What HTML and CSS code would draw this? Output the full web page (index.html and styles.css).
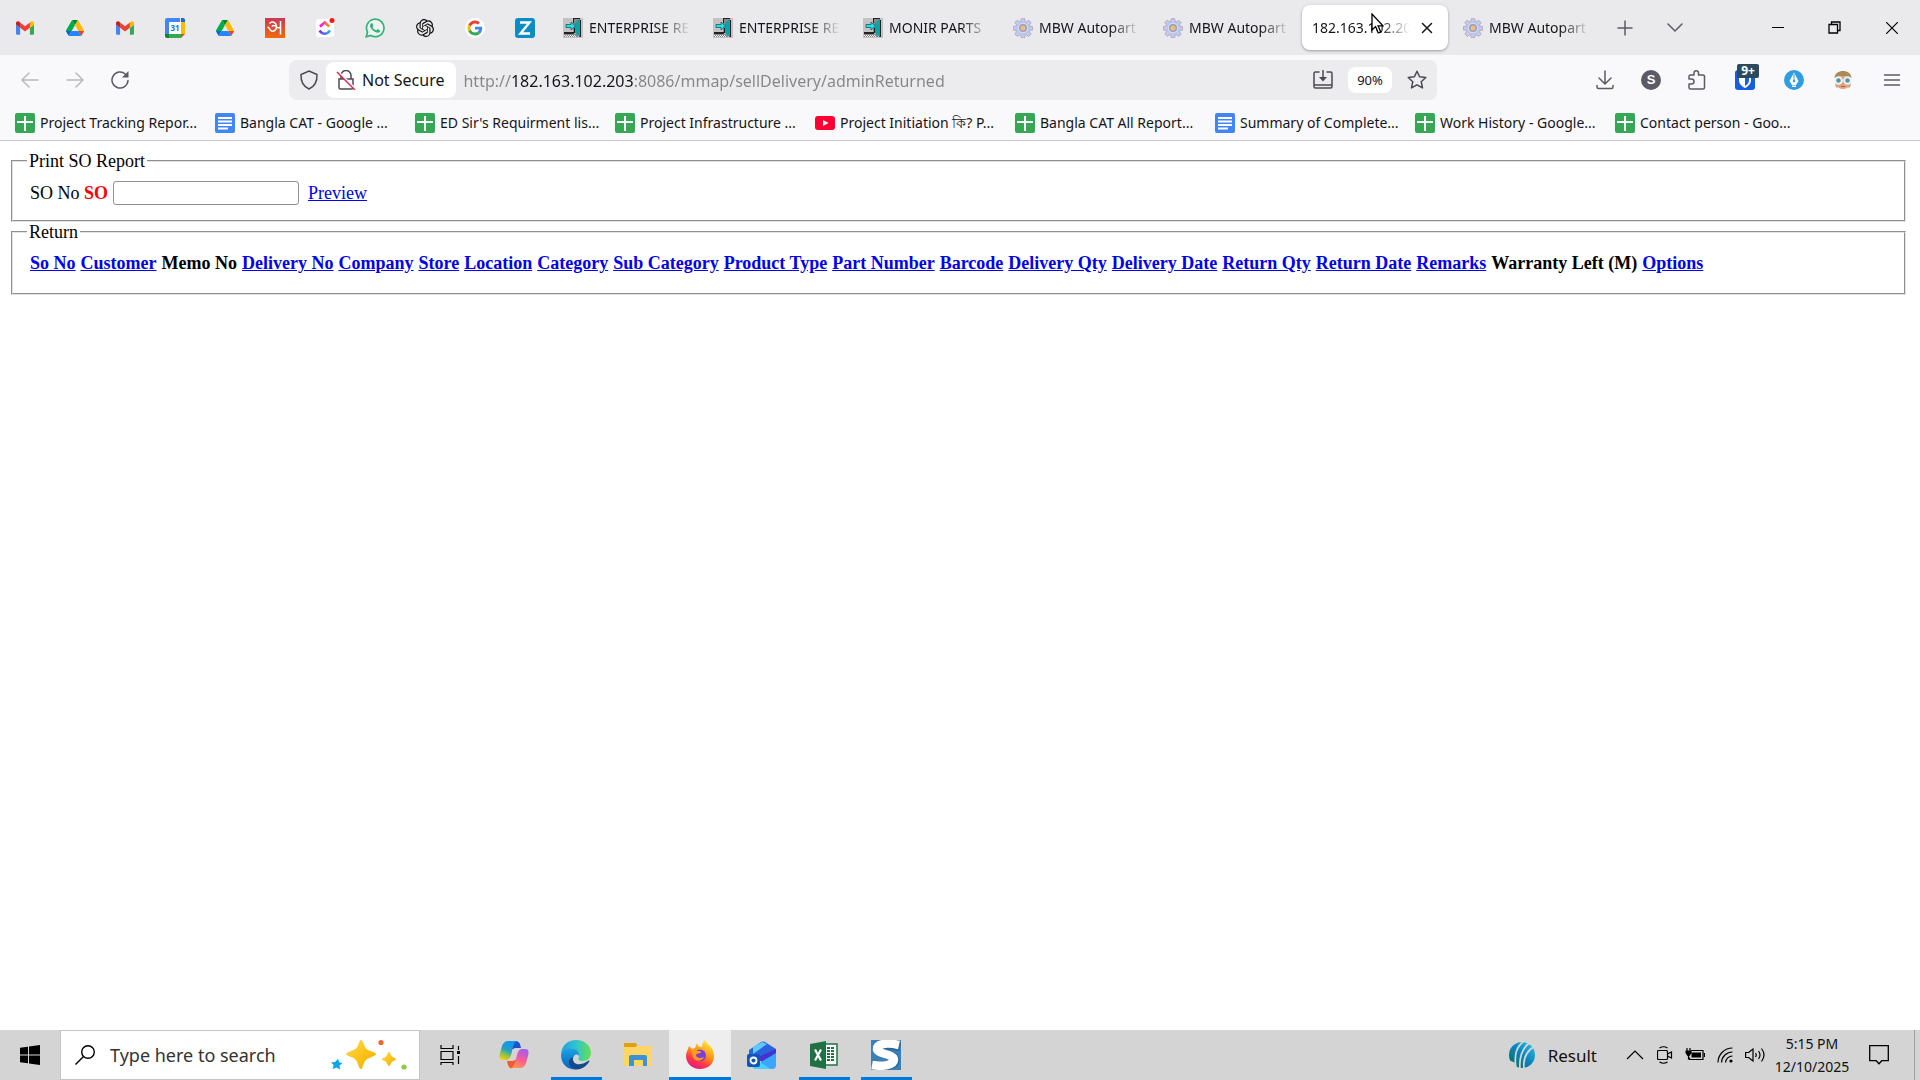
FILE: index.html
```html
<!DOCTYPE html>
<html lang="en">
<head>
  <meta charset="UTF-8">
  <title>Return</title>
  <link rel="stylesheet" href="styles.css">
</head>
<body>
  <!-- shared icons -->
  <svg class="defs" width="0" height="0" aria-hidden="true">
    <symbol id="gmail" viewBox="52 42 88 66">
      <path fill="#4285f4" d="M58 108h14V74L52 59v43c0 3.32 2.69 6 6 6"/>
      <path fill="#34a853" d="M120 108h14c3.32 0 6-2.69 6-6V59l-20 15"/>
      <path fill="#fbbc04" d="M120 48v26l20-15v-8c0-7.42-8.47-11.65-14.4-7.2"/>
      <path fill="#ea4335" d="M72 74V48l24 18 24-18v26L96 92"/>
      <path fill="#c5221f" d="M52 51v8l20 15V48l-5.6-4.2c-5.94-4.45-14.4-.22-14.4 7.2"/>
    </symbol>
    <symbol id="drive" viewBox="0 0 87.3 78">
      <path d="m6.6 66.85 3.85 6.65c.8 1.4 1.95 2.5 3.3 3.3l13.75-23.8h-27.5c0 1.55.4 3.1 1.2 4.5z" fill="#0066da"/>
      <path d="m43.65 25-13.75-23.8c-1.35.8-2.5 1.9-3.3 3.3l-25.4 44a9.06 9.06 0 0 0 -1.2 4.5h27.5z" fill="#00ac47"/>
      <path d="m73.55 76.8c1.35-.8 2.5-1.9 3.3-3.3l1.6-2.75 7.65-13.25c.8-1.4 1.2-2.95 1.2-4.5h-27.502l5.852 11.5z" fill="#ea4335"/>
      <path d="m43.65 25 13.75-23.8c-1.35-.8-2.9-1.2-4.5-1.2h-18.5c-1.6 0-3.15.45-4.5 1.2z" fill="#00832d"/>
      <path d="m59.8 53h-32.3l-13.75 23.8c1.35.8 2.9 1.2 4.5 1.2h50.8c1.6 0 3.15-.45 4.5-1.2z" fill="#2684fc"/>
      <path d="m73.4 26.5-12.7-22c-.8-1.4-1.95-2.5-3.3-3.3l-13.75 23.8 16.15 28h27.45c0-1.55-.4-3.1-1.2-4.5z" fill="#ffba00"/>
    </symbol>
    <symbol id="door" viewBox="0 0 20 20">
      <path fill="#c3c3c3" d="M0 0h20v20H0z"/>
      <path fill="#8a8a8a" d="M10 1h7v14h-7zM1 16h14v3H1z"/>
      <path fill="#222" d="M10 0h7v1h-6v4h-1zM1 14h10v2H1zM11 10h1v5h-1zM16 2h2v17h-2z"/>
      <path fill="#0aa3a3" d="M12 5l5-4v18l-5-4z"/>
      <path fill="#25e0e0" stroke="#055" stroke-width=".7" d="M3 6.500h5V4l4.500 4L8 12V9.500H3z"/>
      <path stroke="#eee" stroke-dasharray="1 1" d="M1 17.500h12M2 18.500h12"/>
    </symbol>
    <symbol id="gear" viewBox="0 0 20 20">
      <g fill="#c6cbea" stroke="#ab9dc4" stroke-width=".8">
        <path d="M8.300.7h3.400l.5 2.700 1.300.5 2.300-1.600 2.300 2.300-1.600 2.300.6 1.400 2.600.4v3.300l-2.700.5-.5 1.300 1.600 2.300-2.300 2.300-2.300-1.600-1.400.6-.4 2.500H8.300l-.5-2.600-1.300-.5-2.300 1.600-2.300-2.300 1.600-2.300-.6-1.400L.4 12V8.600l2.600-.4.5-1.400-1.600-2.300 2.300-2.300 2.300 1.600 1.400-.5z"/>
        <circle cx="10" cy="10" r="6" fill="#c8dcf3" stroke="#b2b9e0"/>
        <circle cx="10" cy="10" r="4" fill="#9c9cc0" stroke="none"/>
        <circle cx="10" cy="10" r="2.600" fill="#eebb78" stroke="none"/>
      </g>
    </symbol>
    <symbol id="sheet" viewBox="0 0 20 20">
      <rect width="20" height="20" rx="2" fill="#34a853"/>
      <path fill="#fff" d="M9 3h2v5h7v2h-7v8H9v-8H2V8h7z"/>
    </symbol>
    <symbol id="doc" viewBox="0 0 20 20">
      <rect width="20" height="20" rx="2" fill="#4285f4"/>
      <path fill="#fff" d="M3 4h14v2H3zM3 7.500h14v2H3zM3 11h14v2H3zM3 14.500h10v2H3z"/>
    </symbol>
  </svg>

  <nav class="tabs" aria-label="Tabs">
    <button class="pin" aria-label="Gmail"><svg class="ico small"><use href="#gmail"/></svg></button>
    <button class="pin" aria-label="Drive"><svg class="ico small"><use href="#drive"/></svg></button>
    <button class="pin" aria-label="Gmail"><svg class="ico small"><use href="#gmail"/></svg></button>
    <button class="pin" aria-label="Calendar">
      <svg class="ico" viewBox="0 0 20 20">
        <path fill="#4285f4" d="M2 0h13v4H4v12H0V2a2 2 0 0 1 2-2z"/>
        <path fill="#1967d2" d="M16 0h2a2 2 0 0 1 2 2v2h-4z"/>
        <path fill="#fbbc04" d="M16 4h4v12h-4z"/>
        <path fill="#188038" d="M0 16h4v4H2a2 2 0 0 1-2-2z"/>
        <path fill="#34a853" d="M4 16h12v4H4z"/>
        <path fill="#ea4335" d="M16 16h4l-4 4z"/>
        <path fill="#fff" d="M4 4h12v12H4z"/>
        <text class="cal-num" x="10" y="13" text-anchor="middle">31</text>
      </svg>
    </button>
    <button class="pin" aria-label="Drive"><svg class="ico small"><use href="#drive"/></svg></button>
    <button class="pin" aria-label="Bangla dictionary">
      <svg class="ico" viewBox="0 0 20 20">
        <defs><linearGradient id="ban" x2="0" y2="1"><stop stop-color="#c73a55"/><stop offset="1" stop-color="#ef6a10"/></linearGradient></defs>
        <path fill="url(#ban)" d="M0 0h20v20H0z"/>
        <path fill="none" stroke="#fff" stroke-width="1.500" d="M4.500 5.500C7 3 11 4 11.500 8c.5 4-3 6-5 5-2-1-2-3.500-4-4M7 8.500c1-1.500 3-1 4.500.5 1.500 1 3 1 4 0M15.500 3v13.500"/>
      </svg>
    </button>
    <button class="pin" aria-label="ClickUp">
      <svg class="ico" viewBox="0 0 20 20">
        <defs>
          <linearGradient id="cu1"><stop stop-color="#f0f"/><stop offset="1" stop-color="#ffa000"/></linearGradient>
          <linearGradient id="cu2"><stop stop-color="#8a2be2"/><stop offset="1" stop-color="#20b8f5"/></linearGradient>
        </defs>
        <rect x="1" y="1" width="18" height="18" rx="3" fill="#fff"/>
        <path fill="none" stroke="url(#cu1)" stroke-width="2.500" d="M5 8.500l4.700-4 4.700 4"/>
        <path fill="none" stroke="url(#cu2)" stroke-width="2.500" d="M4.500 12.500c3 4.300 7.500 4.300 10.500 0"/>
        <circle cx="17" cy="2.500" r="2.500" fill="#fa1818"/>
      </svg>
    </button>
    <button class="pin" aria-label="WhatsApp">
      <svg class="ico" viewBox="0 0 24 24">
        <path fill="#fff" fill-opacity=".4" stroke="#2bb673" stroke-width="2" d="M1.500 22.500l1.500-5.700A10.500 10.500 0 1 1 7 21z"/>
        <path fill="#2bb673" d="M17.472 14.382c-.297-.149-1.758-.867-2.03-.967-.273-.099-.471-.148-.67.15-.197.297-.767.966-.94 1.164-.173.199-.347.223-.644.075-.297-.15-1.255-.463-2.39-1.475-.883-.788-1.480-1.761-1.653-2.059-.173-.297-.018-.458.13-.606.134-.133.298-.347.446-.52.149-.174.198-.298.298-.497.099-.198.05-.371-.025-.52-.075-.149-.669-1.612-.916-2.207-.242-.579-.487-.5-.669-.51-.173-.008-.371-.01-.57-.01-.198 0-.52.074-.792.372-.272.297-1.040 1.016-1.040 2.479 0 1.462 1.065 2.875 1.213 3.074.149.198 2.096 3.200 5.077 4.487.709.306 1.262.489 1.694.625.712.227 1.360.195 1.871.118.571-.085 1.758-.719 2.006-1.413.248-.694.248-1.289.173-1.413-.074-.124-.272-.198-.57-.347z"/>
      </svg>
    </button>
    <button class="pin" aria-label="ChatGPT">
      <svg class="ico small" viewBox="0 0 24 24">
        <path fill="#111" d="M22.2819 9.8211a5.9847 5.9847 0 0 0-.5157-4.9108 6.0462 6.0462 0 0 0-6.5098-2.9A6.0651 6.0651 0 0 0 4.9807 4.1818a5.9847 5.9847 0 0 0-3.9977 2.9 6.0462 6.0462 0 0 0 .7427 7.0966 5.98 5.98 0 0 0 .511 4.9107 6.051 6.051 0 0 0 6.5146 2.9001A5.9847 5.9847 0 0 0 13.2599 24a6.0557 6.0557 0 0 0 5.7718-4.2058 5.9894 5.9894 0 0 0 3.9977-2.9001 6.0557 6.0557 0 0 0-.7475-7.0729zm-9.022 12.6081a4.4755 4.4755 0 0 1-2.8764-1.0408l.1419-.0804 4.7783-2.7582a.7948.7948 0 0 0 .3927-.6813v-6.7369l2.02 1.1686a.071.071 0 0 1 .038.052v5.5826a4.504 4.504 0 0 1-4.4945 4.4944zm-9.6607-4.1254a4.4708 4.4708 0 0 1-.5346-3.0137l.142.0852 4.783 2.7582a.7712.7712 0 0 0 .7806 0l5.8428-3.3685v2.3324a.0804.0804 0 0 1-.0332.0615L9.74 19.9502a4.4992 4.4992 0 0 1-6.1408-1.6464zM2.3408 7.8956a4.485 4.485 0 0 1 2.3655-1.9728V11.6a.7664.7664 0 0 0 .3879.6765l5.8144 3.3543-2.0201 1.1685a.0757.0757 0 0 1-.071 0l-4.8303-2.7865A4.504 4.504 0 0 1 2.3408 7.872zm16.5963 3.8558L13.1038 8.364 15.1192 7.2a.0757.0757 0 0 1 .071 0l4.8303 2.7913a4.4944 4.4944 0 0 1-.6765 8.1042v-5.6772a.79.79 0 0 0-.407-.667zm2.0107-3.0231l-.142-.0852-4.7735-2.7818a.7759.7759 0 0 0-.7854 0L9.409 9.2297V6.8974a.0662.0662 0 0 1 .0284-.0615l4.8303-2.7866a4.4992 4.4992 0 0 1 6.6802 4.66zM8.3065 12.863l-2.02-1.1638a.0804.0804 0 0 1-.038-.0567V6.0742a4.4992 4.4992 0 0 1 7.3757-3.4537l-.142.0805L8.704 5.459a.7948.7948 0 0 0-.3927.6813zm1.0976-2.3654l2.602-1.4998 2.6069 1.4998v2.9994l-2.5974 1.4997-2.6067-1.4997Z"/>
      </svg>
    </button>
    <button class="pin" aria-label="Google">
      <svg class="ico" viewBox="-8 -8 64 64">
        <circle cx="24" cy="24" r="32" fill="#fff"/>
        <path fill="#EA4335" d="M24 9.500c3.540 0 6.710 1.220 9.210 3.600l6.850-6.850C35.900 2.380 30.470 0 24 0 14.620 0 6.510 5.380 2.560 13.220l7.980 6.190C12.430 13.720 17.740 9.500 24 9.500z"/>
        <path fill="#4285F4" d="M46.980 24.550c0-1.570-.15-3.090-.38-4.550H24v9.020h12.940c-.58 2.960-2.260 5.480-4.780 7.180l7.730 6c4.510-4.180 7.090-10.360 7.090-17.650z"/>
        <path fill="#FBBC05" d="M10.530 28.590c-.48-1.450-.76-2.990-.76-4.590s.27-3.140.76-4.590l-7.980-6.190C.92 16.460 0 20.120 0 24c0 3.880.92 7.540 2.560 10.780l7.970-6.190z"/>
        <path fill="#34A853" d="M24 48c6.480 0 11.930-2.130 15.890-5.810l-7.730-6c-2.150 1.450-4.920 2.300-8.160 2.300-6.260 0-11.570-4.220-13.470-9.910l-7.980 6.190C6.510 42.620 14.620 48 24 48z"/>
      </svg>
    </button>
    <button class="pin" aria-label="Zoho">
      <svg class="ico" viewBox="0 0 20 20">
        <rect width="20" height="20" rx="3" fill="#0c8cc7"/>
        <path fill="none" stroke="#fff" stroke-width="2.400" d="M5 4.500h9.500L5.500 15.500H15"/>
      </svg>
    </button>
    <button class="tab"><svg class="ico"><use href="#door"/></svg><span>ENTERPRISE RE</span></button>
    <button class="tab"><svg class="ico"><use href="#door"/></svg><span>ENTERPRISE RE</span></button>
    <button class="tab"><svg class="ico"><use href="#door"/></svg><span>MONIR PARTS</span></button>
    <button class="tab"><svg class="ico"><use href="#gear"/></svg><span>MBW Autopart</span></button>
    <button class="tab"><svg class="ico"><use href="#gear"/></svg><span>MBW Autopart</span></button>
    <div class="tab active">
      <span>182.163.102.203</span>
      <button class="plain" aria-label="Close tab"><svg width="12" height="12" viewBox="0 0 12 12"><path class="ln dark" d="M1.500 1.500l9 9M10.500 1.500l-9 9"/></svg></button>
      <svg class="cursor" width="13" height="21" viewBox="0 0 13 21"><path fill="#fff" stroke="#000" stroke-width="1.300" d="M1 1v16l3.600-3.400L7.300 20l2.500-1.100-2.700-6H12z"/></svg>
    </div>
    <button class="tab"><svg class="ico"><use href="#gear"/></svg><span>MBW Autopart</span></button>
    <button class="strip-btn" aria-label="New tab"><svg width="16" height="16" viewBox="0 0 16 16"><path class="ln" d="M8 1v14M1 8h14"/></svg></button>
    <button class="strip-btn" aria-label="List all tabs"><svg width="16" height="16" viewBox="0 0 16 16"><path class="ln" d="M1 4l7 7 7-7"/></svg></button>
    <div class="win-btns">
      <button aria-label="Minimize"><svg width="12" height="12" viewBox="0 0 12 12"><path stroke="#000" d="M0 5.500h12"/></svg></button>
      <button aria-label="Restore"><svg width="13" height="13" viewBox="0 0 13 13"><path fill="none" stroke="#000" stroke-width="1.300" d="M1 3.500h8.500V12H1zM3.500 3.500V1H12v8.500H9.500"/></svg></button>
      <button aria-label="Close"><svg width="12" height="12" viewBox="0 0 12 12"><path stroke="#000" stroke-width="1.200" d="M0 0l12 12M12 0L0 12"/></svg></button>
    </div>
  </nav>

  <div class="toolbar">
    <div class="nav-btns">
      <button disabled aria-label="Back"><svg width="20" height="20" viewBox="0 0 20 20"><path class="ln off" d="M18 10H2.500M9 3l-7 7 7 7"/></svg></button>
      <button disabled aria-label="Forward"><svg width="20" height="20" viewBox="0 0 20 20"><path class="ln off" d="M2 10h15.500M11 3l7 7-7 7"/></svg></button>
      <button aria-label="Reload"><svg width="20" height="20" viewBox="0 0 20 20"><path class="ln" d="M18 10.500a8 8 0 1 1-2.500-6.300"/><path fill="#5b5b66" d="M18.500 1v6.500H12z"/></svg></button>
    </div>
    <div class="urlbar">
      <button class="plain shield" aria-label="Tracking protection"><svg width="20" height="20" viewBox="0 0 20 20"><path class="ln dark2" d="M10 1l8 3.500c.3 7-2.500 12-8 14.500-5.500-2.500-8.300-7.500-8-14.500z"/></svg></button>
      <button class="secure">
        <svg width="20" height="20" viewBox="0 0 20 20"><path class="ln dark2" d="M5 9V5.500a5 5 0 0 1 10 0V9M3 9h14v8.500a1.500 1.500 0 0 1-1.500 1.500h-11A1.500 1.500 0 0 1 3 17.500z"/><path stroke="#fff" stroke-width="2" d="M2 1.500l18 18"/><path stroke="#e22850" stroke-width="1.500" d="M1 2l18 18"/></svg>
        Not Secure
      </button>
      <input class="url" type="text" aria-label="Address" value="http://182.163.102.203:8086/mmap/sellDelivery/adminReturned">
      <button class="plain" aria-label="Install site"><svg width="20" height="20" viewBox="0 0 20 20"><path class="ln dark2" stroke-width="2" d="M6 2H2.500A1.500 1.500 0 0 0 1 3.500v13A1.500 1.500 0 0 0 2.500 18h15a1.500 1.500 0 0 0 1.500-1.500v-13A1.500 1.500 0 0 0 17.500 2H14M1 15h18M10 0v9"/><path fill="#4a4a52" d="M6 7h8l-4 4.500z"/></svg></button>
      <button class="zoom">90%</button>
      <button class="plain" aria-label="Bookmark"><svg width="20" height="20" viewBox="0 0 20 20"><path class="ln dark2" stroke-linejoin="round" d="M10 1.200l2.600 5.600 6.200.7-4.600 4.200 1.300 6.200L10 14.800l-5.500 3.100 1.300-6.200L1.200 7.500l6.200-.7z"/></svg></button>
    </div>
    <div class="tools">
      <button aria-label="Downloads"><svg width="20" height="20" viewBox="0 0 20 20"><path class="ln" d="M10 1v12.500M4 8l6 6 6-6M2 15.500V17a1.500 1.500 0 0 0 1.500 1.500h13A1.500 1.500 0 0 0 18 17v-1.500"/></svg></button>
      <button aria-label="Account"><span class="avatar">S</span></button>
      <button aria-label="Extensions"><svg width="20" height="20" viewBox="0 0 20 20"><path class="ln" stroke-linejoin="round" d="M2 9V6.500A1.500 1.500 0 0 1 3.500 5H7V3a2.200 2.200 0 0 1 4.500 0v2H16a1.500 1.500 0 0 1 1.500 1.500v11A1.500 1.500 0 0 1 16 19H3.500A1.500 1.500 0 0 1 2 17.500V14h2.500a2.300 2.300 0 0 0 0-5z"/></svg></button>
      <button class="addon warden" aria-label="Bitwarden"><svg width="20" height="20" viewBox="0 0 20 20"><rect width="20" height="20" rx="3" fill="#175ddc"/><path fill="#fff" d="M4 3h12v7c0 4-3 6.500-6 8-3-1.500-6-4-6-8z"/><path fill="#175ddc" d="M10 5h4v5c0 3-2 5-4 6z"/></svg><span class="badge">9+</span></button>
      <button class="addon" aria-label="Pen tool"><svg width="20" height="20" viewBox="0 0 20 20"><circle cx="10" cy="10" r="10" fill="#2f9de0"/><path fill="#fff" d="M10 2.500l4.500 8.500-2.500 4H8l-2.500-4zM8 15.500h4V17H8z"/><path stroke="#2f9de0" d="M10 4v6.500"/><circle cx="10" cy="11" r="1.200" fill="#2f9de0"/></svg></button>
      <button class="addon" aria-label="Profile"><svg width="20" height="20" viewBox="0 0 20 20"><ellipse cx="10" cy="11" rx="8" ry="8" fill="#e0a07c"/><path fill="#a98a58" d="M1.500 8C2 3 5.500 1 10 1s8 2 8.500 7L13 6H7z"/><path fill="#a98a58" d="M2 13l3 5-2-1zM18 13l-3 5 2-1z"/><g fill="#4e98a5" stroke="#eef4f4" stroke-width="2"><circle cx="5.500" cy="10.500" r="3.300"/><circle cx="14.500" cy="10.500" r="3.300"/></g><path stroke="#c4574c" d="M8 16.500h4"/></svg></button>
      <button class="addon" aria-label="Menu"><svg width="16" height="16" viewBox="0 0 16 16"><path class="ln" d="M0 3h16M0 8h16M0 13h16"/></svg></button>
    </div>
  </div>

  <nav class="bookmarks" aria-label="Bookmarks">
    <a href="#"><svg class="ico"><use href="#sheet"/></svg>Project Tracking Repor...</a>
    <a href="#"><svg class="ico"><use href="#doc"/></svg>Bangla CAT - Google ...</a>
    <a href="#"><svg class="ico"><use href="#sheet"/></svg>ED Sir's Requirment lis...</a>
    <a href="#"><svg class="ico"><use href="#sheet"/></svg>Project Infrastructure ...</a>
    <a href="#"><svg class="ico" viewBox="0 0 20 20"><rect y="3" width="20" height="14" rx="3" fill="#ff0033"/><path fill="#fff" d="M8 7l5.500 3L8 13z"/></svg>Project Initiation কি? P...</a>
    <a href="#"><svg class="ico"><use href="#sheet"/></svg>Bangla CAT All Report...</a>
    <a href="#"><svg class="ico"><use href="#doc"/></svg>Summary of Complete...</a>
    <a href="#"><svg class="ico"><use href="#sheet"/></svg>Work History - Google...</a>
    <a href="#"><svg class="ico"><use href="#sheet"/></svg>Contact person - Goo...</a>
  </nav>

  <main class="page">
    <fieldset>
      <legend>Print SO Report</legend>
      <div class="so-row">
        <label for="soNo">SO No <b>SO</b></label>
        <input id="soNo" type="text">
        <a href="#">Preview</a>
      </div>
    </fieldset>
    <fieldset class="list">
      <legend>Return</legend>
      <table>
        <thead>
          <tr>
            <th><a href="#">So No</a></th>
            <th><a href="#">Customer</a></th>
            <th>Memo No</th>
            <th><a href="#">Delivery No</a></th>
            <th><a href="#">Company</a></th>
            <th><a href="#">Store</a></th>
            <th><a href="#">Location</a></th>
            <th><a href="#">Category</a></th>
            <th><a href="#">Sub Category</a></th>
            <th><a href="#">Product Type</a></th>
            <th><a href="#">Part Number</a></th>
            <th><a href="#">Barcode</a></th>
            <th><a href="#">Delivery Qty</a></th>
            <th><a href="#">Delivery Date</a></th>
            <th><a href="#">Return Qty</a></th>
            <th><a href="#">Return Date</a></th>
            <th><a href="#">Remarks</a></th>
            <th>Warranty Left (M)</th>
            <th><a href="#">Options</a></th>
          </tr>
        </thead>
      </table>
    </fieldset>
  </main>

  <footer class="taskbar">
    <button class="start" aria-label="Start"><svg width="20" height="20" viewBox="0 0 20 20"><path d="M0 2.800L8 1.700v7.800H0zM9 1.500L20 0v9.500H9zM0 10.500h8v7.800l-8-1.100zM9 10.500h11V20L9 18.500z"/></svg></button>
    <div class="search">
      <svg width="20" height="20" viewBox="0 0 20 20"><circle cx="13" cy="7" r="6.300" fill="none" stroke="#000" stroke-width="1.400"/><path stroke="#000" stroke-width="1.400" d="M8.500 11.500L.5 19.500"/></svg>
      <input type="text" aria-label="Search" placeholder="Type here to search">
      <svg width="76" height="32" viewBox="0 0 76 32">
        <defs><linearGradient id="star" x2="1" y2="1"><stop stop-color="#ffd95a"/><stop offset=".5" stop-color="#fcc419"/><stop offset="1" stop-color="#f2a900"/></linearGradient></defs>
        <path fill="url(#star)" d="M30 1c2 0 3 6 5 8.500S45 13 45 15s-7 3.500-10 6-3 9-5 9-3-6-5-9-10-4-10-6 7-3 10-5.500S28 1 30 1z"/>
        <path fill="url(#star)" d="M58 13c1.200 0 2 3.500 3 4.500s4 1.500 4 2.700-3 1.500-4 2.600-1.800 4.200-3 4.200-2-3-3-4.200-4-1.400-4-2.600 3-1.700 4-2.700 1.800-4.500 3-4.500z"/>
        <path fill="#0aa5ea" d="M7 20l1.500 3.500 3 .5-3 2.500.5 4-3.500-2-4 1.500 1.200-4L0 23.500l4-.5z"/>
        <circle cx="50" cy="3.500" r="2.600" fill="#f0652f"/>
        <circle cx="73" cy="28" r="2.600" fill="#8ccc3c"/>
      </svg>
    </div>
    <div class="apps">
      <button class="view" aria-label="Task View"><svg width="20" height="20" viewBox="0 0 20 20"><path fill="none" stroke="#000" stroke-width="1.200" d="M1 0v3.500h12V0M1 6.500h12v8H1zM1 20v-2.500h12V20M18.500 1v4M18.500 11v8"/><path d="M17 6h3v3h-3z"/></svg></button>
      <button aria-label="Copilot">
        <svg width="30" height="28" viewBox="0 0 30 28">
          <defs>
            <linearGradient id="cp1" x1=".6" y1="0" x2=".2" y2="1"><stop stop-color="#1493f0"/><stop offset=".45" stop-color="#20a0c8"/><stop offset=".75" stop-color="#9bc53d"/><stop offset="1" stop-color="#f5cf1d"/></linearGradient>
            <linearGradient id="cp2" x1=".6" y1="0" x2=".2" y2="1"><stop stop-color="#a95cf0"/><stop offset=".5" stop-color="#f65d96"/><stop offset="1" stop-color="#fc9a4c"/></linearGradient>
          </defs>
          <path fill="#1753cf" d="M16 0c4 0 5 2 6 7h-6l-4 2z"/>
          <path fill="#f4592f" d="M14 27c-4 1-5-2-6-7h6l4-2z"/>
          <path fill="url(#cp1)" d="M9 0h9c-3 1-4 5-5 10s-2 9-6 9H4c-4 0-4-3-3-7l2-7c1-3 3-5 6-5z"/>
          <path fill="url(#cp2)" d="M21 27h-9c3-1 4-5 5-9s2-10 6-10h3c4 0 4 3 3 7l-2 7c-1 3-3 5-6 5z"/>
        </svg>
      </button>
      <button class="run" aria-label="Edge">
        <svg width="30" height="30" viewBox="0 0 30 30">
          <defs>
            <linearGradient id="eg1"><stop stop-color="#1f9fe0"/><stop offset=".5" stop-color="#30c4d0"/><stop offset="1" stop-color="#66e04c"/></linearGradient>
            <linearGradient id="eg2" x2="0" y2="1"><stop stop-color="#1ba1e2"/><stop offset="1" stop-color="#0c61bd"/></linearGradient>
          </defs>
          <path fill="url(#eg1)" d="M0 14C1 5 7 0 15 0c9 0 15 6 15 13 0 5-4 8-8 8-5 0-5-2-4-4 1-3-1-6-5-7C7 8 2 10 0 14z"/>
          <path fill="url(#eg2)" d="M0 15C1 10 6 8 11 9c5 0 8 4 7 7-2-3-6-1-6 3 0 5 6 10 11 8-10 6-23 1-23-12z"/>
          <path fill="#114a8c" d="M12 17c-2 5 4 11 15 4 1-1 2 0 1 1-5 8-14 9-18 5-4-4-2-9 2-10z"/>
        </svg>
      </button>
      <button aria-label="File Explorer"><svg width="28" height="24" viewBox="0 0 28 24"><path fill="#e0a010" d="M1 0h11l1 2-1 2H0V1a1 1 0 0 1 1-1z"/><path fill="#ffd565" d="M0 4h12l2-1h13a1 1 0 0 1 1 1v18a1 1 0 0 1-1 1H1a1 1 0 0 1-1-1z"/><path fill="#3c92d4" d="M5 14a2 2 0 0 1 2-2h14a2 2 0 0 1 2 2v9h-4v-6h-9v6H5z"/></svg></button>
      <button class="run current" aria-label="Firefox">
        <svg width="30" height="30" viewBox="0 0 30 30">
          <defs><linearGradient id="ff" x1=".8" y1="0" x2=".3" y2="1"><stop stop-color="#fff04a"/><stop offset=".45" stop-color="#ff980e"/><stop offset=".75" stop-color="#ff3647"/><stop offset="1" stop-color="#e31587"/></linearGradient></defs>
          <path fill="url(#ff)" d="M4 6l3 3 3-1 2-5c1 3 2 4 5 4 0-3 1-5 3-7 1 4 9 6 9 16 0 8-6 13-14 13S1 23 1 16c0-4 2-6 3-10z"/>
          <circle cx="15" cy="15.500" r="6" fill="#7b3ed8"/>
          <path fill="#ff9a1c" d="M5 9c4-1 5 1 8 2 2 0 3 0 3 1 0 2-5 1-5 3 0 3 5 4 8 2-2 5-9 5-11 0-1-3-1-5-3-8z"/>
        </svg>
      </button>
      <button aria-label="Outlook">
        <svg width="30" height="28" viewBox="0 0 30 28">
          <path fill="#2b62de" d="M2 9L14 1a4 4 0 0 1 4 0l11 7v10H2z"/>
          <path fill="#5ec8ff" d="M6 6l9-5 5 2L6 13z"/>
          <path fill="#4433cc" d="M29 8v5l-14 8-6-4z"/>
          <path fill="#39a7ff" d="M29 12v12a4 4 0 0 1-4 4H12l2-7z"/>
          <path fill="#49d0ff" d="M8 18l16 10H9a4 4 0 0 1-4-4z"/>
          <rect y="13" width="13" height="13" rx="2" fill="#0f56b8"/>
          <circle cx="6.500" cy="19.500" r="3" fill="none" stroke="#fff" stroke-width="1.800"/>
        </svg>
      </button>
      <button class="run" aria-label="Excel"><svg width="28" height="28" viewBox="0 0 28 28"><path fill="#fff" stroke="#1f7244" stroke-width="1.500" d="M12 3h15v21H12z"/><path stroke="#1f7244" stroke-width="2" stroke-dasharray="3 1" d="M17 7h8M17 10h8M17 13h8M17 16h8M17 19h8"/><path fill="#1f7244" d="M0 3l16-3v28L0 25z"/><path stroke="#fff" stroke-width="2.200" d="M5 8.500l6 11M11 8.500l-6 11"/></svg></button>
      <button class="run" aria-label="S app"><svg width="30" height="30" viewBox="0 0 30 30"><path fill="#3c80b8" d="M0 0h30v30H0z"/><path fill="none" stroke="#2c6797" stroke-width="9" d="M29 7C16 4 7 4 7 9s17 5 17 11-11 7-23 5"/><path fill="none" stroke="#fff" stroke-width="8.500" d="M28 5C15 2 6 4 6 9s17 5 17 10.500S12 27 1 25"/></svg></button>
    </div>
    <div class="tray">
      <button class="result">
        <svg width="28" height="28" viewBox="0 0 28 28"><defs><linearGradient id="icc" x1="1" y1="0" x2="0" y2="1"><stop stop-color="#34c3e8"/><stop offset=".5" stop-color="#0a83bd"/><stop offset="1" stop-color="#0b6b52"/></linearGradient></defs><circle cx="14" cy="14" r="13" fill="url(#icc)"/><path fill="none" stroke="#d6d8d8" stroke-width="1.700" d="M16 0C8 6 6 14 8 27M21 2C14 8 11 17 12 28M27 5c-9 5-12 14-11 23"/><path fill="#d4d4d4" d="M0 19l8 3v6H0z"/></svg>
        Result
      </button>
      <button class="more" aria-label="Show hidden icons"><svg width="18" height="10" viewBox="0 0 18 10"><path class="tl" d="M1 9l8-8 8 8"/></svg></button>
      <button aria-label="Meet Now"><svg width="16" height="18" viewBox="0 0 16 18"><path class="tl" d="M1.500 4.500h8a1 1 0 0 1 1 1v7a1 1 0 0 1-1 1h-8a1 1 0 0 1-1-1v-7a1 1 0 0 1 1-1zM10.500 8l4-2v6l-4-2M2.500 2q4-2.500 8 0M2.500 16q4 2.500 8 0"/></svg></button>
      <button aria-label="Battery"><svg width="20" height="14" viewBox="0 0 20 14"><path class="tl" d="M6 2.500h12v9H4.500V9.500M19.500 5v4M2 3V0M5 3V0M3.500 7v4h1"/><path d="M6.500 4.500H16v5H6.500zM.5 2.500h6V5L4.500 8h-2L.5 5z"/></svg></button>
      <button aria-label="Network"><svg width="16" height="16" viewBox="0 0 16 16"><path class="tl" d="M1 15.500A14.500 14.500 0 0 1 15.500 1M4.500 15.500A11 11 0 0 1 15.500 5M8.500 15.500A7 7 0 0 1 15.500 9"/><circle cx="14" cy="14" r="1.600"/></svg></button>
      <button aria-label="Volume"><svg width="20" height="16" viewBox="0 0 20 16"><path class="tl" d="M.6 5.500h3L8 2v12L3.600 10.500h-3zM10.500 6q1.500 2 0 4M13.500 4q3 4 0 8M16.500 1.500q5 6.500 0 13"/></svg></button>
      <div class="clock"><time>5:15 PM</time><time>12/10/2025</time></div>
      <button class="notes" aria-label="Notifications"><svg width="20" height="20" viewBox="0 0 20 20"><path fill="none" stroke="#000" stroke-width="1.300" d="M.7.7h18.600v15h-6.500L10 18.800l-2.800-3.100H.7z"/></svg></button>
      <button class="desktop" aria-label="Show desktop"></button>
    </div>
  </footer>
</body>
</html>
```
FILE: styles.css
```css
* {
  box-sizing: border-box;
}
body {
  margin: 0;
  min-height: 100vh;
  display: flex;
  flex-direction: column;
  background: #fff;
  font-family: "Noto Sans", "Open Sans", sans-serif;
  font-size: 14px;
  color: #15141a;
}
button {
  padding: 0;
  border: none;
  background: none;
  color: inherit;
  font: inherit;
  display: flex;
  align-items: center;
  justify-content: center;
}
svg {
  display: block;
  flex: none;
}
.defs {
  position: absolute;
}
.ico {
  width: 20px;
  height: 20px;
}
.small {
  width: 18px;
  height: 18px;
}
.ln {
  fill: none;
  stroke: #5b5b66;
  stroke-width: 1.5;
  stroke-linecap: round;
}
.dark {
  stroke: #15141a;
}
.dark2 {
  stroke: #4a4a52;
}
.off {
  stroke: #b9b9bf;
}
.tl {
  fill: none;
  stroke: #000;
  stroke-width: 1.2;
}
.cal-num {
  font: bold 8px "Open Sans", sans-serif;
  fill: #1a73e8;
}

/* tab strip */
.tabs {
  display: flex;
  height: 55px;
  background: #eaeaec;
}
.pin {
  width: 50px;
}
.tab {
  width: 150px;
  padding: 0 10px 0 13px;
  gap: 6px;
  justify-content: flex-start;
}
.tab span {
  flex: 1;
  overflow: hidden;
  white-space: nowrap;
  text-align: left;
  mask-image: linear-gradient(to left, transparent, #000 30px);
}
.active {
  position: relative;
  display: flex;
  align-items: center;
  width: 146px;
  margin: 5px 2px;
  padding: 0 15px 0 10px;
  gap: 11px;
  background: #fff;
  border-radius: 8px;
  box-shadow: 0 1px 3px rgba(0,0,0,0.35);
}
.cursor {
  position: absolute;
  left: 69px;
  top: 8px;
}
.strip-btn {
  width: 50px;
}
.win-btns {
  display: flex;
  margin-left: auto;
}
.win-btns button {
  width: 57px;
}

/* toolbar */
.toolbar {
  display: flex;
  align-items: center;
  height: 50px;
  background: #f9f9fb;
}
.nav-btns {
  display: flex;
  width: 289px;
  padding-left: 7px;
}
.nav-btns button {
  width: 45px;
}
.urlbar {
  flex: 1;
  display: flex;
  align-items: center;
  height: 40px;
  padding: 0 10px;
  background: #ececee;
  border-radius: 8px;
}
.shield {
  margin-right: 7px;
}
.secure {
  height: 36px;
  padding: 0 12px 0 10px;
  gap: 6px;
  background: #fff;
  border-radius: 8px;
  font-size: 16px;
}
/* the host part is darker than the rest of the address */
.url {
  flex: 1;
  min-width: 0;
  height: 36px;
  margin-left: 7px;
  padding: 2px 0 0;
  border: none;
  outline: none;
  font: 16px "Noto Sans", "Open Sans", sans-serif;
  color: transparent;
  background: linear-gradient(to right, #85858a 49px, #15141a 49px, #15141a 171px, #85858a 171px);
  background-clip: text;
}
.zoom {
  width: 44px;
  height: 26px;
  margin: 0 15px;
  background: #fff;
  border-radius: 8px;
  font-size: 13px;
}
.tools {
  display: flex;
  justify-content: flex-end;
  width: 483px;
  padding-right: 4px;
}
.tools button {
  width: 46px;
}
.tools .addon {
  width: 49px;
}
.avatar {
  width: 20px;
  height: 20px;
  border-radius: 10px;
  background: #5b5b66;
  color: #fff;
  font: bold 13px/20px "Liberation Sans", sans-serif;
}
.warden {
  position: relative;
}
.badge {
  position: absolute;
  left: 17px;
  top: -6px;
  width: 22px;
  height: 14px;
  border-radius: 2px;
  background: #2c4a5c;
  color: #fff;
  font: bold 12px/13px "Noto Sans", sans-serif;
}

/* bookmarks bar */
.bookmarks {
  display: flex;
  height: 36px;
  padding: 0 15px;
  background: #f9f9fb;
  border-bottom: 1px solid #cacace;
}
.bookmarks a {
  display: flex;
  align-items: center;
  width: 200px;
  gap: 5px;
  color: #15141a;
  line-height: 20px;
  text-decoration: none;
  white-space: nowrap;
}

/* page content */
.page {
  flex: 1;
  padding: 10px 14px 10px 11px;
  font-family: "Liberation Serif", serif;
  font-size: 18px;
  line-height: 20px;
  color: #000;
}
.page a {
  color: #0000ee;
}
fieldset {
  margin: 0;
  padding: 10px 14px 15px;
  border: 2px groove #e3e3e3;
}
.list {
  padding: 8px 13px 17px;
}
legend {
  padding: 0 2px;
}
.list legend {
  margin-left: 1px;
}
.so-row {
  display: flex;
  align-items: center;
  padding-left: 3px;
}
.so-row label b {
  color: red;
}
.so-row input {
  width: 186px;
  height: 24px;
  margin: 0 9px 0 5px;
  border: 1px solid #8f8f9d;
  border-radius: 3px;
}
table {
  border-spacing: 3px 2px;
}
th {
  padding: 1px;
  white-space: nowrap;
}

/* taskbar */
.taskbar {
  display: flex;
  height: 50px;
  background: #d4d4d4;
  color: #111;
}
.start {
  width: 60px;
}
.search {
  display: flex;
  align-items: center;
  width: 360px;
  padding: 0 12px 0 14px;
  gap: 15px;
  background: #fff;
  border: 1px solid #c4c4c4;
}
.search input {
  flex: 1;
  min-width: 0;
  padding: 0;
  border: none;
  outline: none;
  font: 18px "Noto Sans", "Open Sans", sans-serif;
}
.search input::placeholder {
  color: #333;
}
.apps {
  display: flex;
}
.apps button {
  width: 62px;
}
.apps .view {
  width: 60px;
  margin-right: 3px;
}
.run {
  background: linear-gradient(#0078d7, #0078d7) center bottom / 51px 3px no-repeat;
}
.current {
  background-color: #eeeeee;
  background-size: 100% 3px;
}
.tray {
  display: flex;
  margin-left: auto;
}
.tray button {
  width: 30px;
}
.tray .result {
  width: auto;
  gap: 12px;
  margin-right: 23px;
  font-size: 17px;
}
.clock {
  display: flex;
  flex-direction: column;
  justify-content: center;
  width: 84px;
  font-size: 14px;
  line-height: 23px;
  text-align: center;
}
.tray .notes {
  width: 50px;
  margin-right: 10px;
}
.tray .desktop {
  width: 6px;
  border-left: 1px solid #a0a0a0;
}
```
